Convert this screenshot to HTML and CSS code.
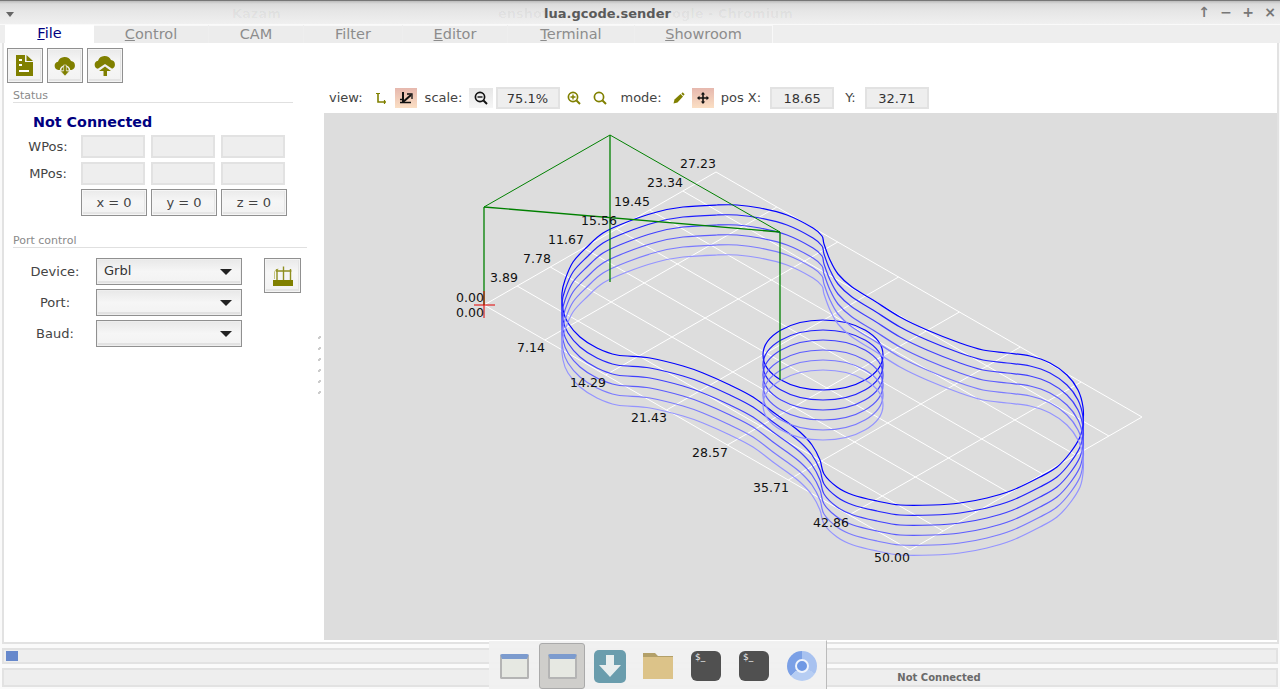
FILE: index.html
```html
<!DOCTYPE html>
<html lang="en">
<head>
    <meta charset="UTF-8">
    <title>lua.gcode.sender</title>
    <link rel="stylesheet" href="styles.css">
</head>
<body>
    <div class="titlebar">
        <span class="menu-arrow"></span>
        <span class="ghost ghost-kazam">Kazam</span>
        <span class="ghost ghost-shot">enshot</span>
        <span class="ghost ghost-chrome">ogle - Chromium</span>
        <span class="title">lua.gcode.sender</span>
        <div class="win-controls">
            <span>↑</span><span>−</span><span>+</span><span>×</span>
        </div>
    </div>

    <div class="tabs">
        <div class="tab tab-active tab-file"><u>F</u>ile</div>
        <div class="tab tab-control"><u>C</u>ontrol</div>
        <div class="tab tab-cam">CAM</div>
        <div class="tab tab-filter">Filter</div>
        <div class="tab tab-editor"><u>E</u>ditor</div>
        <div class="tab tab-terminal"><u>T</u>erminal</div>
        <div class="tab tab-showroom"><u>S</u>howroom</div>
    </div>

    <div class="content">
        <div class="sidebar">
            <div class="file-tools">
                <button class="tool-btn">
                    <svg class="file-icon" width="17" height="21" viewBox="0 0 17 21">
                        <path d="M0 0H9V7H17V21H0Z" fill="#808000"/>
                        <path d="M10.500 0L17 6H10.500Z" fill="#808000"/>
                        <rect x="3" y="4" width="3" height="2" fill="#fff"/>
                        <rect x="3" y="9" width="3" height="2" fill="#fff"/>
                        <rect x="3" y="15" width="10" height="2" fill="#fff"/>
                    </svg>
                </button>
                <button class="tool-btn">
                    <svg width="22" height="22" viewBox="0 0 22 22">
                        <path d="M4.500 15a4.200 4.200 0 0 1-.5-8.300A7 7 0 0 1 17 6a4.600 4.600 0 0 1 .5 9Z" fill="#808000"/>
                        <path d="M6.500 15.500a4.500 4.500 0 0 1 9 0" fill="#808000" stroke="#f2f2f2" stroke-width="1.600"/>
                        <path d="M9.600 10H12.400V16H15.500L11 21L6.500 16H9.600Z" fill="#808000" stroke="#f2f2f2" stroke-width=".6"/>
                    </svg>
                </button>
                <button class="tool-btn">
                    <svg width="22" height="22" viewBox="0 0 22 22">
                        <path d="M4.500 14a4.200 4.200 0 0 1-.5-8.300A7 7 0 0 1 17 5a4.600 4.600 0 0 1 .5 9Z" fill="#808000"/>
                        <path d="M2 15L11 9L20 15Z" fill="#f2f2f2"/>
                        <path d="M11 11.500L17 16H13V21H9.500V16H5Z" fill="#808000"/>
                    </svg>
                </button>
            </div>

            <div class="group-label group-status">Status</div>
            <div class="conn-state">Not Connected</div>
            <div class="pos-row">
                <span class="pos-label">WPos:</span>
                <span class="field pos-field"></span>
                <span class="field pos-field"></span>
                <span class="field pos-field"></span>
            </div>
            <div class="pos-row">
                <span class="pos-label">MPos:</span>
                <span class="field pos-field"></span>
                <span class="field pos-field"></span>
                <span class="field pos-field"></span>
            </div>
            <div class="pos-row zero-row">
                <span class="pos-label"></span>
                <button class="btn zero-btn">x = 0</button>
                <button class="btn zero-btn">y = 0</button>
                <button class="btn zero-btn">z = 0</button>
            </div>

            <div class="group-label group-port">Port control</div>
            <div class="port-grid">
                <div class="port-rows">
                    <div class="port-row">
                        <span class="port-label">Device:</span>
                        <div class="combo">Grbl</div>
                    </div>
                    <div class="port-row">
                        <span class="port-label">Port:</span>
                        <div class="combo"></div>
                    </div>
                    <div class="port-row">
                        <span class="port-label">Baud:</span>
                        <div class="combo"></div>
                    </div>
                </div>
                <button class="tool-btn port-btn">
                    <svg width="22" height="22" viewBox="0 0 22 22">
                        <path d="M2.500 14V7a4 4 0 0 1 4-3" fill="none" stroke="#c4c480" stroke-width="1"/>
                        <path d="M5 15V4M18.500 15V4M4 6H19.500" fill="none" stroke="#8f8f20" stroke-width="1.400"/>
                        <path d="M11.500 1.500V15" stroke="#8f8f20" stroke-width="1.400"/>
                        <rect x="1" y="15" width="20" height="6" fill="#808000"/>
                    </svg>
                </button>
            </div>
        </div>

        <div class="sash">
            <i></i><i></i><i></i><i></i><i></i><i></i>
        </div>

        <div class="main">
            <div class="viewbar">
                <span class="vb-text vb-view">view:</span>
                <span class="vb-icon vb-axis">
                    <svg width="14" height="14" viewBox="0 0 14 14">
                        <path d="M4 2V11H12" fill="none" stroke="#808000" stroke-width="1.600"/>
                        <path d="M2 2.500H6M10.500 9V13" fill="none" stroke="#808000" stroke-width="1.200"/>
                    </svg>
                </span>
                <span class="vb-toggle">
                    <svg width="14" height="14" viewBox="0 0 14 14">
                        <path d="M4 1V12" fill="none" stroke="#111" stroke-width="2"/>
                        <path d="M4 11L12 4" fill="none" stroke="#111" stroke-width="2"/>
                        <path d="M1 8.500H5M1 11.500H12" fill="none" stroke="#111" stroke-width="1.300"/>
                        <path d="M8 3H13V8" fill="none" stroke="#111" stroke-width="1.300"/>
                    </svg>
                </span>
                <span class="vb-text vb-scale">scale:</span>
                <span class="vb-zoomout">
                    <svg width="14" height="14" viewBox="0 0 14 14">
                        <circle cx="6" cy="6" r="4.600" fill="none" stroke="#111" stroke-width="1.700"/>
                        <path d="M3.500 6H8.500" stroke="#111" stroke-width="1.400"/>
                        <path d="M9.500 9.500L13 13" stroke="#111" stroke-width="2"/>
                    </svg>
                </span>
                <span class="field vb-field vb-pct">75.1%</span>
                <span class="vb-icon vb-zoomin">
                    <svg width="14" height="14" viewBox="0 0 14 14">
                        <circle cx="6" cy="6" r="4.600" fill="none" stroke="#808000" stroke-width="1.700"/>
                        <path d="M3.500 6H8.500M6 3.500V8.500" stroke="#808000" stroke-width="1.400"/>
                        <path d="M9.500 9.500L13 13" stroke="#808000" stroke-width="2"/>
                    </svg>
                </span>
                <span class="vb-icon vb-fit">
                    <svg width="14" height="14" viewBox="0 0 14 14">
                        <circle cx="6" cy="6" r="4.600" fill="none" stroke="#808000" stroke-width="1.700"/>
                        <path d="M9.500 9.500L13 13" stroke="#808000" stroke-width="2"/>
                    </svg>
                </span>
                <span class="vb-text vb-mode">mode:</span>
                <span class="vb-icon vb-pencil">
                    <svg width="14" height="14" viewBox="0 0 14 14">
                        <path d="M1.500 12.500L2.500 8.500L8.500 3L11 5.500L5.500 11.500Z" fill="#808000"/>
                        <path d="M10 2L12 4" stroke="#808000" stroke-width="1.800"/>
                    </svg>
                </span>
                <span class="vb-toggle vb-move">
                    <svg width="14" height="14" viewBox="0 0 14 14">
                        <path d="M7 1L9.200 3.500H7.800V6.200H10.500V4.800L13 7L10.500 9.200V7.800H7.800V10.500H9.200L7 13L4.800 10.500H6.200V7.800H3.500V9.200L1 7L3.500 4.800V6.200H6.200V3.500H4.800Z" fill="#111"/>
                    </svg>
                </span>
                <span class="vb-text vb-posx">pos X:</span>
                <span class="field vb-field vb-x">18.65</span>
                <span class="vb-text vb-y">Y:</span>
                <span class="field vb-field vb-yval">32.71</span>
            </div>

            <div class="canvas">
                <svg id="plot" class="plot" viewBox="324 113 953 527">
                    <g id="grid"></g>
                    <g id="layers"></g>
                    <g id="bounds"></g>
                    <path d="M484 291V318M474 305H495" fill="none" stroke="#e00000" stroke-width="1"/>
                    <g class="plot-labels">
                        <text x="698" y="168">27.23</text>
                        <text x="665" y="187">23.34</text>
                        <text x="632" y="206">19.45</text>
                        <text x="599" y="225">15.56</text>
                        <text x="566" y="244">11.67</text>
                        <text x="537" y="263">7.78</text>
                        <text x="504" y="282">3.89</text>
                        <text x="470" y="302">0.00</text>
                        <text x="470" y="317">0.00</text>
                        <text x="531" y="352">7.14</text>
                        <text x="588" y="387">14.29</text>
                        <text x="649" y="422">21.43</text>
                        <text x="710" y="457">28.57</text>
                        <text x="771" y="492">35.71</text>
                        <text x="831" y="527">42.86</text>
                        <text x="892" y="562">50.00</text>
                    </g>
                </svg>
            </div>
        </div>
    </div>

    <div class="bar progress"><div class="progress-chunk"></div></div>
    <div class="bar statusbar">Not Connected</div>

    <div class="dock">
        <div class="dock-item"><div class="dock-window"></div></div>
        <div class="dock-item"><div class="dock-active"><div class="dock-window"></div></div></div>
        <div class="dock-item">
            <svg width="32" height="33" viewBox="0 0 32 33">
                <rect width="32" height="33" rx="5" fill="#6a9dad"/>
                <path d="M12 5H20V15H27L16 27L5 15H12Z" fill="#e8eeee"/>
            </svg>
        </div>
        <div class="dock-item">
            <svg width="30" height="26" viewBox="0 0 30 26">
                <path d="M0 0H12L15 3H30V8H0Z" fill="#b3a069"/>
                <rect y="4" width="30" height="22" fill="#dcc389"/>
            </svg>
        </div>
        <div class="dock-item"><div class="dock-term">$_</div></div>
        <div class="dock-item"><div class="dock-term">$_</div></div>
        <div class="dock-item"><div class="dock-chrome"><div class="dock-chrome-eye"></div></div></div>
    </div>

    <script src="plot.js"></script>
</body>
</html>
```

FILE: styles.css
```css
html, body {
    height: 100%;
}

body {
    margin: 0;
    width: 1280px;
    height: 689px;
    overflow: hidden;
    position: relative;
    background-color: #fafafa;
    color: #444;
    font-family: "DejaVu Sans", sans-serif;
    font-size: 13px;
}

button {
    font-family: inherit;
    padding: 0;
    margin: 0;
}

/* window title */
.titlebar {
    height: 24px;
    position: relative;
    display: flex;
    justify-content: center;
    align-items: center;
    box-sizing: border-box;
    border-top: 1px solid #777;
    background: linear-gradient(#bcbcbc 0, #dcdcdc 3px, #e6e6e6 10px, #f0f0f0 100%);
}

.title {
    margin-left: -65px;
    margin-top: 2px;
    font-size: 13px;
    font-weight: bold;
    color: #5a5a5a;
}

.menu-arrow {
    position: absolute;
    left: 6px;
    top: 11px;
    border-left: 4px solid transparent;
    border-right: 4px solid transparent;
    border-top: 5px solid #666;
}

.ghost {
    position: absolute;
    top: 5px;
    font-weight: bold;
    color: rgba(0, 0, 0, 0.04);
}

.ghost-kazam { left: 232px; }
.ghost-shot { left: 498px; }
.ghost-chrome { left: 672px; }

.win-controls {
    position: absolute;
    right: -1px;
    top: 3px;
    display: flex;
    color: #777;
    font-size: 14px;
    font-weight: bold;
}

.win-controls span {
    width: 22px;
    text-align: center;
}

/* tabs */
.tabs {
    height: 18px;
    margin-top: 1px;
    display: flex;
    background-color: #eee;
    padding-left: 5px;
}

.tab {
    box-sizing: border-box;
    height: 100%;
    margin-right: 1px;
    text-align: center;
    font-size: 14.5px;
    line-height: 16px;
    color: #8c8c8c;
    background-color: #ececec;
    border-top: 1px solid #f8f8f8;
}

.tab-active {
    background-color: #fff;
    color: #000080;
    margin-right: 0;
    border-top: none;
    line-height: 17px;
}

.tab-file { width: 89px; }
.tab-control { width: 114px; }
.tab-cam { width: 94px; }
.tab-filter { width: 98px; }
.tab-editor { width: 104px; }
.tab-terminal { width: 126px; }
.tab-showroom { width: 138px; border-right: 1px solid #f8f8f8; margin-right: 0; }

/* main area */
.content {
    height: 601px;
    box-sizing: border-box;
    margin: 0 1px 0 2px;
    display: flex;
    background-color: #fff;
    border-left: 2px solid #e2e2e2;
    border-right: 2px solid #e2e2e2;
    border-bottom: 2px solid #e2e2e2;
}

.sidebar {
    width: 314px;
    flex: none;
    box-sizing: border-box;
}

.file-tools {
    display: flex;
    gap: 4px;
    padding: 5px 0 0 3px;
}

.tool-btn {
    width: 36px;
    height: 35px;
    display: flex;
    align-items: center;
    justify-content: center;
    box-sizing: border-box;
    border: 1px solid #909090;
    box-shadow: inset 0 0 0 1px #f4f4f4, inset -1px -2px 0 1px #e4e4e4;
    background: linear-gradient(#e9e9e9, #f7f7f7 40%, #f2f2f2);
}

.file-icon {
    margin-left: -1px;
}

.group-label {
    margin-left: 9px;
    font-size: 11px;
    line-height: 13px;
    color: #8a8a8a;
    border-bottom: 1px solid #e0e0e0;
}

.group-status {
    width: 280px;
    margin-top: 6px;
}

.group-port {
    width: 294px;
    margin-top: 18px;
}

.conn-state {
    margin: 11px 0 0 29px;
    font-size: 14.3px;
    line-height: 17px;
    font-weight: bold;
    color: #000080;
}

.pos-row {
    display: flex;
    gap: 6px;
    margin-top: 4px;
    padding-left: 9px;
}

.pos-label {
    width: 68px;
    margin-right: -6px;
    padding-left: 2px;
    box-sizing: border-box;
    text-align: center;
    line-height: 23px;
}

.field {
    display: block;
    box-sizing: border-box;
    height: 23px;
    border: 2px solid #e2e2e2;
    background-color: #eee;
    color: #333;
    text-align: center;
    line-height: 19px;
}

.pos-field {
    width: 64px;
}

.zero-row {
    gap: 4px;
}

.zero-row .pos-label {
    margin-right: -4px;
}

.btn {
    box-sizing: border-box;
    height: 27px;
    border: 1px solid #909090;
    box-shadow: inset 0 0 0 1px #f6f6f6, inset -1px -2px 0 1px #e6e6e6;
    background: linear-gradient(#eaeaea, #f6f6f6 45%, #f2f2f2);
    font-size: 13px;
    color: #444;
}

.zero-btn {
    width: 66px;
}

.port-grid {
    display: flex;
    gap: 22px;
    margin: 10px 0 0 9px;
    align-items: flex-start;
}

.port-rows {
    display: flex;
    flex-direction: column;
    gap: 4px;
}

.port-row {
    display: flex;
    align-items: center;
}

.port-label {
    width: 83px;
    box-sizing: border-box;
    padding-left: 1px;
    text-align: center;
}

.combo {
    width: 146px;
    height: 27px;
    position: relative;
    box-sizing: border-box;
    padding-left: 7px;
    border: 1px solid #909090;
    box-shadow: inset 0 0 0 1px #eee, inset 0 -2px 0 1px #e2e2e2;
    background: linear-gradient(#e8e8e8, #f6f6f6 50%, #f2f2f2);
    line-height: 24px;
    color: #333;
}

.combo::after {
    content: "";
    position: absolute;
    right: 9px;
    top: 10px;
    border-left: 6px solid transparent;
    border-right: 6px solid transparent;
    border-top: 6px solid #222;
}

.port-btn {
    width: 37px;
}

/* drag handle between the panes */
.sash {
    width: 6px;
    flex: none;
    display: flex;
    flex-direction: column;
    gap: 8px;
    padding-top: 293px;
    box-sizing: border-box;
}

.sash i {
    display: block;
    width: 3px;
    height: 3px;
    background: linear-gradient(135deg, transparent 30%, #ccc 30%, #ccc 70%, transparent 70%);
}

.main {
    flex: 1;
    min-width: 0;
    padding-top: 44px;
}

/* view options */
.viewbar {
    height: 22px;
    display: flex;
    align-items: center;
    margin-bottom: 4px;
    color: #444;
}

.vb-text {
    line-height: 22px;
}

.vb-icon {
    width: 16px;
    display: flex;
    justify-content: center;
}

.vb-toggle {
    width: 22px;
    height: 20px;
    display: flex;
    align-items: center;
    justify-content: center;
    background: linear-gradient(#e6b8ae, #fbdfc4);
}

.vb-zoomout {
    width: 24px;
    height: 20px;
    display: flex;
    justify-content: center;
    align-items: center;
    margin-left: 6px;
    background: linear-gradient(#e6e6e6, #f6f6f6);
}

.vb-field {
    height: 22px;
    line-height: 19px;
    width: 64px;
}

.vb-view { margin-left: 5px; }
.vb-axis { margin-left: 10px; }
.vb-axis + .vb-toggle { margin-left: 6px; }
.vb-scale { margin-left: 8px; }
.vb-pct { margin-left: 3px; }
.vb-zoomin { margin-left: 6px; }
.vb-fit { margin-left: 10px; }
.vb-mode { margin-left: 13px; }
.vb-pencil { margin-left: 9px; }
.vb-move { margin-left: 5px; }
.vb-posx { margin-left: 7px; }
.vb-x { margin-left: 9px; }
.vb-y { margin-left: 11px; }
.vb-yval { margin-left: 9px; }

.canvas {
    height: 527px;
    margin-right: 0;
    background-color: #ddd;
}

.plot {
    display: block;
    width: 100%;
    height: 100%;
}

.plot-labels text {
    font-family: "DejaVu Sans", sans-serif;
    font-size: 12.5px;
    fill: #111;
    text-anchor: middle;
}

/* bottom bars */
.bar {
    box-sizing: border-box;
    margin-left: 2px;
    width: 1276px;
    border: 2px solid #e2e2e2;
    background-color: #eee;
}

.progress {
    height: 16px;
    margin-top: 4px;
    padding: 1px 0 0 2px;
}

.progress-chunk {
    width: 12px;
    height: 10px;
    background-color: #6688cc;
}

.statusbar {
    height: 19px;
    margin-top: 4px;
    padding-left: 598px;
    text-align: center;
    font-size: 10px;
    font-weight: bold;
    line-height: 15px;
    color: #6a6a6a;
}

/* desktop dock on top of the window */
.dock {
    position: absolute;
    left: 489px;
    top: 640px;
    width: 338px;
    height: 49px;
    box-sizing: border-box;
    display: flex;
    padding: 2px 0 0 1px;
    background-color: rgba(240, 240, 240, 0.96);
    border-top: 1px solid #fff;
    border-right: 1px solid #bbb;
}

.dock-item {
    width: 48px;
    height: 46px;
    box-sizing: border-box;
    display: flex;
    align-items: center;
    justify-content: center;
}

.dock-active {
    width: 46px;
    height: 46px;
    box-sizing: border-box;
    display: flex;
    align-items: center;
    justify-content: center;
    background-color: #cfcecb;
    border: 1px solid #aaa;
    border-radius: 3px;
}

.dock-window {
    width: 29px;
    height: 25px;
    box-sizing: border-box;
    border: 2px solid #b4b4b4;
    border-radius: 2px;
    border-top: 5px solid #7c9bce;
    background-color: #e6e8e2;
}

.dock-term {
    width: 30px;
    height: 30px;
    box-sizing: border-box;
    padding: 1px 0 0 4px;
    border-radius: 6px;
    background-color: #505050;
    color: #eee;
    font-size: 9px;
    line-height: 11px;
}

.dock-chrome {
    width: 30px;
    height: 30px;
    display: flex;
    align-items: center;
    justify-content: center;
    border-radius: 50%;
    background: conic-gradient(#a8c2f0 0 120deg, #b6cdf3 120deg 230deg, #7ba0e6 230deg 360deg);
}

.dock-chrome-eye {
    width: 10px;
    height: 10px;
    border: 2px solid #f0f4fc;
    border-radius: 50%;
    background-color: #6f98e4;
}
```

FILE: plot.js
```js
const SVG_NS = 'http://www.w3.org/2000/svg';

// top outline of the part, screen coordinates
const outline = [
    [562, 293], [565, 280], [573, 262], [587, 247], [603, 233], [627, 222], [657, 212],
    [683, 207], [717, 205], [737, 205], [760, 208], [787, 215], [813, 228], [822, 236],
    [824, 244], [830, 260], [838, 274], [852, 287], [873, 300], [900, 317], [927, 330],
    [960, 343], [983, 350], [1007, 353], [1030, 356], [1050, 363], [1067, 375], [1078, 390],
    [1083, 407], [1083, 423], [1080, 437], [1070, 453], [1057, 467], [1040, 477], [1013, 490],
    [987, 498], [960, 503], [933, 505], [900, 505], [877, 501], [853, 495], [837, 487],
    [824, 474], [820, 460], [812, 445], [800, 432], [787, 422], [773, 412], [753, 397],
    [730, 385], [703, 373], [683, 366], [650, 358], [617, 355], [597, 348], [580, 337],
    [568, 323], [563, 310]
];

const layerColors = ['#0000ff', '#2020ff', '#4040ff', '#5c5cff', '#7a7aff', '#9494ff'];

function addShape(parent, tag, attrs) {
    const el = document.createElementNS(SVG_NS, tag);
    Object.keys(attrs).forEach((key) => el.setAttribute(key, attrs[key]));
    parent.appendChild(el);
    return el;
}

// closed catmull-rom curve through the points
function smoothPath(points, dy) {
    const n = points.length;
    let d = `M${points[0][0]} ${points[0][1] + dy}`;
    for (let i = 0; i < n; i++) {
        const p0 = points[(i + n - 1) % n];
        const p1 = points[i];
        const p2 = points[(i + 1) % n];
        const p3 = points[(i + 2) % n];
        const c1x = p1[0] + (p2[0] - p0[0]) / 6;
        const c1y = p1[1] + (p2[1] - p0[1]) / 6 + dy;
        const c2x = p2[0] - (p3[0] - p1[0]) / 6;
        const c2y = p2[1] - (p3[1] - p1[1]) / 6 + dy;
        d += `C${c1x} ${c1y} ${c2x} ${c2y} ${p2[0]} ${p2[1] + dy}`;
    }
    return d + 'Z';
}

function drawGrid() {
    const grid = document.getElementById('grid');
    const ox = 484, oy = 305;
    const ax = 426 / 7, ay = 245 / 7;
    const bx = 232 / 7, by = -133 / 7;
    for (let i = 0; i <= 7; i++) {
        addShape(grid, 'line', {
            x1: ox + ax * i, y1: oy + ay * i,
            x2: ox + ax * i + bx * 7, y2: oy + ay * i + by * 7,
            stroke: '#fff'
        });
        addShape(grid, 'line', {
            x1: ox + bx * i, y1: oy + by * i,
            x2: ox + bx * i + ax * 7, y2: oy + by * i + ay * 7,
            stroke: '#fff'
        });
    }
}

function drawLayers() {
    const layers = document.getElementById('layers');
    layerColors.forEach((color, index) => {
        const dy = index * 10;
        addShape(layers, 'path', {
            d: smoothPath(outline, dy),
            fill: 'none', stroke: color, 'stroke-width': 1.2
        });
        addShape(layers, 'ellipse', {
            cx: 823, cy: 355 + dy, rx: 60, ry: 35,
            fill: 'none', stroke: color, 'stroke-width': 1.2
        });
    });
}

function drawBounds() {
    const bounds = document.getElementById('bounds');
    const segments = [
        [484, 207, 484, 305, 1.3], [610, 135, 610, 282, 1.3], [780, 232, 780, 380, 1.3],
        [484, 207, 610, 135, 1], [610, 135, 780, 232, 1], [484, 207, 780, 232, 1.3]
    ];
    segments.forEach((s) => {
        addShape(bounds, 'line', {
            x1: s[0], y1: s[1], x2: s[2], y2: s[3],
            stroke: '#008000', 'stroke-width': s[4]
        });
    });
}

drawGrid();
drawLayers();
drawBounds();
```
